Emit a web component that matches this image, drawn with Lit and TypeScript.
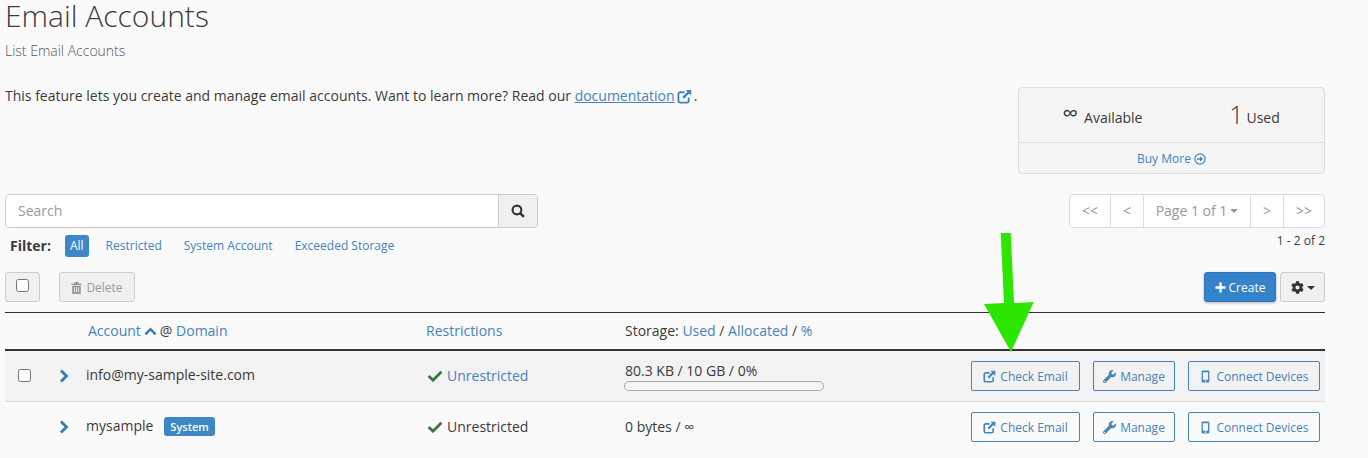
import { LitElement, html, css, svg } from 'lit'
import { customElement } from 'lit/decorators.js'

const icon = (vb: string, body: unknown, cls = '') =>
	html`<svg class="ico ${cls}" viewBox="${vb}" aria-hidden="true">${body}</svg>`

const extLink = () =>
	icon(
		'0 0 16 16',
		svg`<path d="M12.5 9v3.6a1.9 1.9 0 0 1-1.9 1.9H3.4a1.9 1.9 0 0 1-1.9-1.9V5.4a1.9 1.9 0 0 1 1.9-1.9H8" fill="none" stroke="currentColor" stroke-width="2"/><path d="M9.2 1h6v6l-2.2-2.2-5.6 5.6-1.9-1.9 5.6-5.6z" fill="currentColor"/>`,
	)
const wrench = () =>
	icon(
		'0 0 512 512',
		svg`<path fill="currentColor" d="M507.73 109.1c-2.24-9.03-13.54-12.09-20.12-5.51l-74.36 74.36-67.88-11.31-11.31-67.88 74.36-74.36c6.62-6.62 3.43-17.9-5.66-20.16-47.38-11.74-99.55.91-136.58 37.93-39.64 39.64-50.55 97.1-34.05 147.2L18.74 402.76c-24.99 24.99-24.99 65.51 0 90.5 24.99 24.99 65.51 24.99 90.5 0l213.21-213.21c50.12 16.71 107.47 5.68 147.37-34.22 37.07-37.07 49.7-89.32 37.91-136.73zM64 472c-13.25 0-24-10.75-24-24 0-13.26 10.75-24 24-24s24 10.74 24 24c0 13.25-10.75 24-24 24z"/>`,
	)
const mobile = () =>
	icon(
		'0 0 10 16',
		svg`<path fill="currentColor" fill-rule="evenodd" d="M2 .5h6A1.8 1.8 0 0 1 9.8 2.3v11.4A1.8 1.8 0 0 1 8 15.5H2A1.8 1.8 0 0 1 .2 13.7V2.3A1.8 1.8 0 0 1 2 .5zM1.8 2.8v9.2h6.4V2.8zM5 12.7a1 1 0 1 0 0 2 1 1 0 0 0 0-2z"/>`,
	)
const check = () =>
	icon(
		'0 0 16 12',
		svg`<path d="M1.6 6l4.4 4.2L14.4 1.8" fill="none" stroke="currentColor" stroke-width="2.8"/>`,
		'check',
	)
const chevron = () =>
	icon(
		'0 0 10 14',
		svg`<path d="M2 1.5L7.5 7 2 12.5" fill="none" stroke="currentColor" stroke-width="2.8"/>`,
		'chev',
	)
const cog = () =>
	icon(
		'0 0 512 512',
		svg`<path fill="currentColor" d="M487.4 315.7l-42.6-24.6c4.3-23.2 4.3-47 0-70.2l42.6-24.6c4.9-2.8 7.1-8.6 5.5-14-11.1-35.6-30-67.8-54.7-94.6-3.8-4.1-10-5.1-14.8-2.3L380.8 110c-17.9-15.4-38.5-27.3-60.8-35.1V25.8c0-5.6-3.9-10.5-9.4-11.7-36.7-8.2-74.3-7.8-109.2 0-5.5 1.2-9.4 6.1-9.4 11.7V75c-22.2 7.9-42.8 19.8-60.8 35.1L88.7 85.5c-4.9-2.8-11-1.9-14.8 2.3-24.7 26.7-43.6 58.9-54.7 94.6-1.7 5.4.6 11.2 5.5 14L67.3 221c-4.3 23.2-4.3 47 0 70.2l-42.6 24.6c-4.9 2.8-7.1 8.6-5.5 14 11.1 35.6 30 67.8 54.7 94.6 3.8 4.1 10 5.1 14.8 2.3l42.6-24.6c17.9 15.4 38.5 27.3 60.8 35.1v49.2c0 5.6 3.9 10.5 9.4 11.7 36.7 8.2 74.3 7.8 109.2 0 5.5-1.2 9.4-6.1 9.4-11.7v-49.2c22.2-7.9 42.8-19.8 60.8-35.1l42.6 24.6c4.9 2.8 11 1.9 14.8-2.3 24.7-26.7 43.6-58.9 54.7-94.6 1.5-5.5-.7-11.3-5.6-14.1zM256 336c-44.1 0-80-35.9-80-80s35.9-80 80-80 80 35.9 80 80-35.9 80-80 80z"/>`,
	)

@customElement('app-root')
export class AppRoot extends LitElement {
	static styles = css`
		:host {
			display: block;
			position: relative;
			width: 1368px;
			height: 458px;
			overflow: hidden;
			background: #fafafa;
			color: #3a3a3a;
			font: 14px/20px 'Open Sans', sans-serif;
		}
		* {
			box-sizing: border-box;
		}
		a {
			color: #4483bc;
			text-decoration: none;
		}
		.ico {
			display: inline-block;
			width: 13px;
			height: 13px;
			vertical-align: -2px;
			flex: none;
		}
		.page {
			width: 1320px;
			margin-left: 5px;
		}
		h1 {
			margin: 0;
			font-size: 30px;
			font-weight: 300;
			line-height: 32px;
		}
		.sub {
			margin: 9px 0 0;
			font-weight: 300;
			line-height: 20px;
			color: #555;
		}
		.intro {
			display: flex;
			justify-content: space-between;
			align-items: flex-start;
			height: 133px;
		}
		.intro p {
			margin: 25px 0 0;
		}
		.intro p a {
			text-decoration: underline;
		}
		.intro p .ico {
			width: 15px;
			height: 15px;
			margin: 0 2px;
			vertical-align: -3px;
		}
		.stats {
			width: 307px;
			height: 87px;
			margin-top: 26px;
			background: #f5f5f5;
			border: 1px solid #ddd;
			border-radius: 4px;
		}
		.stat-row {
			display: flex;
			height: 55px;
			padding-left: 14px;
			border-bottom: 1px solid #ddd;
		}
		.stat {
			display: flex;
			flex: 1;
			justify-content: center;
			align-items: baseline;
			gap: 6px;
			padding-top: 12px;
		}
		.stat.used-count {
			gap: 3px;
			padding: 11px 0 0 13px;
		}
		.stat b {
			position: relative;
			top: 1px;
			font-weight: 300;
			font-size: 25px;
			line-height: 28px;
		}
		.stat b.inf {
			font-size: 22px;
			top: -2px;
			font-weight: 400;
		}
		.buy {
			display: block;
			text-align: center;
			font-size: 12px;
			line-height: 31px;
		}
		.buy .ico {
			width: 12px;
			height: 12px;
		}
		.search-row {
			display: flex;
			justify-content: space-between;
			height: 34px;
		}
		.search {
			display: flex;
			width: 533px;
			border: 1px solid #ccc;
			border-radius: 4px;
			overflow: hidden;
		}
		.search .input {
			flex: 1;
			background: #fff;
			padding: 6px 12px;
			color: #999;
			line-height: 20px;
		}
		.search .go {
			display: flex;
			align-items: center;
			justify-content: center;
			width: 39px;
			background: #f0f0f0;
			border-left: 1px solid #ccc;
			color: #333;
		}
		.search .go .ico {
			width: 14px;
			height: 14px;
		}
		.pager {
			display: flex;
			height: 34px;
			background: #fff;
			border: 1px solid #ddd;
			border-radius: 4px;
			color: #999;
		}
		.pager span {
			display: flex;
			align-items: center;
			justify-content: center;
			height: 32px;
			border-left: 1px solid #ddd;
		}
		.pager span:first-child {
			border-left: 0;
		}
		.caret {
			display: inline-block;
			width: 0;
			height: 0;
			margin-left: 3px;
			border-left: 4px solid transparent;
			border-right: 4px solid transparent;
			border-top: 4px solid currentColor;
		}
		.filter-row {
			display: flex;
			justify-content: space-between;
			height: 44px;
		}
		.filters {
			display: flex;
			align-items: center;
			height: 22px;
			margin-top: 7px;
			padding-left: 5px;
			font-size: 12px;
		}
		.filters strong {
			font-size: 14px;
			margin-right: 14px;
		}
		.filters a {
			margin-right: 22px;
		}
		.filters a.on {
			background: #3d87c7;
			color: #fff;
			border-radius: 3px;
			padding: 0 5px;
			line-height: 22px;
			margin-right: 17px;
		}
		.count {
			font-size: 12px;
			line-height: 18px;
			margin-top: 4px;
		}
		.toolbar {
			display: flex;
			justify-content: space-between;
			height: 30px;
		}
		.left,
		.right {
			display: flex;
		}
		.btn {
			display: flex;
			align-items: center;
			justify-content: center;
			height: 30px;
			padding-top: 1px;
			font-size: 12px;
			border: 1px solid #ccc;
			border-radius: 3px;
			background: #f0f0f0;
			color: #999;
		}
		.box {
			display: block;
			width: 13px;
			height: 13px;
			background: #fff;
			border: 1px solid #767676;
			border-radius: 2.5px;
		}
		.all {
			width: 35px;
			padding: 0 0 4px;
		}
		.del {
			width: 76px;
			margin-left: 19px;
			gap: 4px;
		}
		.del .ico {
			width: 11px;
			height: 12px;
		}
		.create {
			width: 72px;
			gap: 3px;
			background: #3483ca;
			border-color: #2f78b8;
			color: #fff;
			box-shadow: 0 1px 3px rgba(0, 0, 0, 0.3);
		}
		.create .ico {
			width: 11px;
			height: 11px;
		}
		.gear {
			width: 45px;
			margin-left: 4px;
			color: #333;
		}
		.table {
			margin-top: 10px;
			border-top: 1px solid #333;
		}
		.row {
			display: grid;
			grid-template-columns: 45px 36px 340px 199px 1fr auto;
			align-items: center;
		}
		.head {
			height: 38px;
			border-bottom: 2px solid #333;
			padding-bottom: 1px;
		}
		.head .acct {
			padding-left: 2px;
		}
		.head .up {
			width: 13px;
			height: 9px;
			margin: 0 3px;
			vertical-align: 0;
		}
		.item {
			height: 51px;
			border-bottom: 1px solid #ddd;
		}
		.item.first {
			background: #f2f2f2;
		}
		.item.last {
			border-bottom-color: transparent;
		}
		.item > .sel {
			padding-left: 13px;
			padding-bottom: 1px;
		}
		.chev {
			width: 10px;
			height: 14px;
			margin-left: 9px;
			color: #337ab7;
			vertical-align: -2px;
		}
		.name {
			display: flex;
			align-items: center;
			gap: 11px;
			padding-bottom: 2px;
		}
		.label {
			background: #3d87c7;
			color: #fff;
			font-size: 11px;
			font-weight: 600;
			line-height: 19px;
			border-radius: 3px;
			padding: 0 6px;
		}
		.check {
			width: 16px;
			height: 12px;
			margin: 0 4px 0 1px;
			vertical-align: -1px;
			color: #3c763d;
		}
		.used {
			line-height: 18px;
		}
		.bar {
			width: 200px;
			height: 10px;
			margin: 1px 0 0 -1px;
			background: #f5f5f5;
			border: 1px solid #aaa;
			border-radius: 5px;
		}
		.actions {
			display: flex;
			gap: 13px;
			padding-right: 5px;
		}
		.act {
			display: flex;
			align-items: center;
			justify-content: center;
			gap: 4px;
			height: 30px;
			padding-top: 1px;
			font-size: 12px;
			color: #4483bc;
			border: 1px solid #4483bc;
			border-radius: 2px;
		}
		.arrow {
			position: absolute;
			left: 980px;
			top: 230px;
			width: 60px;
			height: 125px;
		}
	`

	private actions() {
		return html`<div class="actions">
			<a class="act" style="width:109px">${extLink()}Check Email</a>
			<a class="act" style="width:82px">${wrench()}Manage</a>
			<a class="act" style="width:132px">${mobile()}Connect Devices</a>
		</div>`
	}

	render() {
		return html`
			<div class="page">
				<h1>Email Accounts</h1>
				<p class="sub">List Email Accounts</p>
				<div class="intro">
					<p>
						This feature lets you create and manage email accounts. Want to learn more? Read our
						<a>documentation</a><a style="text-decoration:none">${extLink()}</a>.
					</p>
					<div class="stats">
						<div class="stat-row">
							<div class="stat"><b class="inf">∞</b> Available</div>
							<div class="stat used-count"><b>1</b> Used</div>
						</div>
						<a class="buy">Buy More ${icon(
							'0 0 16 16',
							svg`<circle cx="8" cy="8" r="6.8" fill="none" stroke="currentColor" stroke-width="1.6"/><path d="M4 7h4V4.4L12 8l-4 3.6V9H4z" fill="currentColor"/>`,
						)}</a>
					</div>
				</div>
				<div class="search-row">
					<div class="search">
						<div class="input">Search</div>
						<div class="go">
							${icon(
								'0 0 16 16',
								svg`<circle cx="6.8" cy="6.8" r="5" fill="none" stroke="currentColor" stroke-width="2.4"/><path d="M10.4 10.4l4.4 4.4" stroke="currentColor" stroke-width="2.8"/>`,
							)}
						</div>
					</div>
					<div class="pager">
						<span style="width:40px">&lt;&lt;</span>
						<span style="width:33px">&lt;</span>
						<span style="width:107px">Page 1 of 1<i class="caret"></i></span>
						<span style="width:33px">&gt;</span>
						<span style="width:41px">&gt;&gt;</span>
					</div>
				</div>
				<div class="filter-row">
					<div class="filters">
						<strong>Filter:</strong>
						<a class="on">All</a>
						<a>Restricted</a>
						<a>System Account</a>
						<a>Exceeded Storage</a>
					</div>
					<div class="count">1 - 2 of 2</div>
				</div>
				<div class="toolbar">
					<div class="left">
						<div class="btn all"><i class="box"></i></div>
						<div class="btn del">
							${icon(
								'0 0 12 14',
								svg`<path fill="currentColor" fill-rule="evenodd" d="M4 0h4l1 2h3v1.4H0V2h3zM1 4.4h10V14H1zM3.2 6v6h1V6zM5.5 6v6h1V6zM7.8 6v6h1V6z"/>`,
							)}
							Delete
						</div>
					</div>
					<div class="right">
						<div class="btn create">
							${icon('0 0 12 12', svg`<path d="M6 .5v11M.5 6h11" stroke="currentColor" stroke-width="2.6"/>`)}
							Create
						</div>
						<div class="btn gear">${cog()}<i class="caret"></i></div>
					</div>
				</div>
				<div class="table">
					<div class="row head">
						<span></span>
						<span></span>
						<span class="acct">
							<a>Account</a>${icon(
								'0 0 14 9',
								svg`<path d="M1.5 7.5L7 2l5.5 5.5" fill="none" stroke="#337ab7" stroke-width="2.6"/>`,
								'up',
							)}@ <a>Domain</a>
						</span>
						<span><a>Restrictions</a></span>
						<span>Storage: <a>Used</a> / <a>Allocated</a> / <a>%</a></span>
					</div>
					<div class="row item first">
						<span class="sel"><i class="box"></i></span>
						<span>${chevron()}</span>
						<span class="name">info@my-sample-site.com</span>
						<span>${check()}<a>Unrestricted</a></span>
						<div class="used">
							80.3 KB / 10 GB / 0%
							<div class="bar"></div>
						</div>
						${this.actions()}
					</div>
					<div class="row item last">
						<span></span>
						<span>${chevron()}</span>
						<span class="name">mysample <span class="label">System</span></span>
						<span>${check()}Unrestricted</span>
						<div>0 bytes / ∞</div>
						${this.actions()}
					</div>
				</div>
			</div>
			<svg class="arrow" viewBox="0 0 60 125" aria-hidden="true">
				<path fill="#2ce600" d="M20.7 3h10L34 73l19.7-1L31 122 4 74l20-1z" />
			</svg>
		`
	}
}
